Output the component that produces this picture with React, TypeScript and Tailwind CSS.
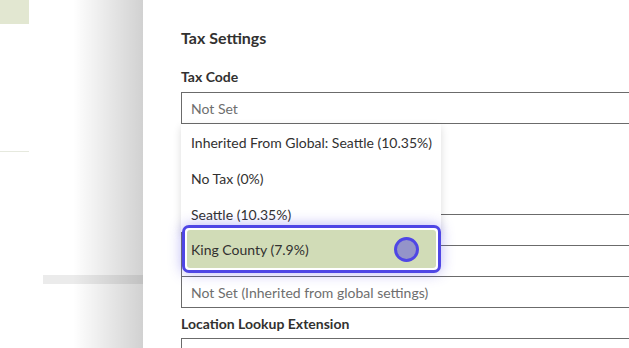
import React from 'react';

const options = [
    'Inherited From Global: Seattle (10.35%)',
    'No Tax (0%)',
    'Seattle (10.35%)',
];

function Field({ value, muted }: { value?: string; muted?: boolean }) {
    return (
        <div
            className={`h-[32px] w-[470px] border border-[#6b6b6b] bg-white flex items-center px-[9px] text-[14px] ${
                muted ? 'text-[#6e6e6e]' : 'text-[#444]'
            }`}
        >
            {value}
        </div>
    );
}

export default function App() {
    return (
        <div
            className="relative w-[629px] h-[348px] overflow-hidden bg-white flex"
            style={{ fontFamily: 'Lato, "Liberation Sans", sans-serif' }}
        >
            {/* page behind the drawer */}
            <div className="relative w-[143px] shrink-0 flex flex-col">
                <div className="w-[29px] h-[24px] bg-[#e2e7d1]" />
                <div className="mt-[127px] w-[29px] h-px bg-[#e6e9de]" />
                <div className="mt-[123px] ml-[43px] h-[9px] bg-[#ebebeb]" />
                <div className="absolute top-0 bottom-0 right-0 w-[70px] bg-gradient-to-r from-transparent to-black/[0.18]" />
            </div>

            {/* drawer */}
            <div className="relative flex-1 pl-[38px] pt-[28px]">
                <h2 className="text-[16px] leading-[20px] font-bold text-[#323130]">Tax Settings</h2>
                <label className="block mt-[19px] text-[14px] leading-[20px] font-bold text-[#323130]">
                    Tax Code
                </label>
                <div className="mt-[5px]">
                    <Field value="Not Set" muted />
                </div>
                <div className="h-[90px]" />
                <Field />
                <div className="-mt-px">
                    <Field />
                </div>
                <div className="-mt-px">
                    <Field value="Not Set (Inherited from global settings)" muted />
                </div>
                <label className="block mt-[6px] text-[14px] leading-[20px] font-bold text-[#323130]">
                    Location Lookup Extension
                </label>
                <div className="mt-[4px]">
                    <Field />
                </div>

                {/* open dropdown */}
                <div className="absolute left-[38px] top-[124px] w-[260px] bg-white shadow-[0_3px_8px_rgba(0,0,0,0.14)] text-[14px] text-[#323130]">
                    {options.map((o) => (
                        <div key={o} className="h-[36px] flex items-center pl-[10px]">
                            {o}
                        </div>
                    ))}
                    <div className="h-[30px] -mb-[30px]" />
                </div>
                <div className="absolute left-[39px] top-[225px] w-[259px] h-[48px] rounded-[7px] border-[3px] border-[#4f46e5] bg-white p-[2px] shadow-[0_0_14px_rgba(79,70,229,0.4)]">
                    <div className="h-full rounded-[3px] bg-[#d1dcb7] flex items-center justify-between pl-[4px] pr-[17px] text-[14px] text-[#323130]">
                        King County (7.9%)
                        <span className="w-[25px] h-[25px] rounded-full border-[3px] border-[#4f46e5] bg-[#9494c9]" />
                    </div>
                </div>
            </div>
        </div>
    );
}
